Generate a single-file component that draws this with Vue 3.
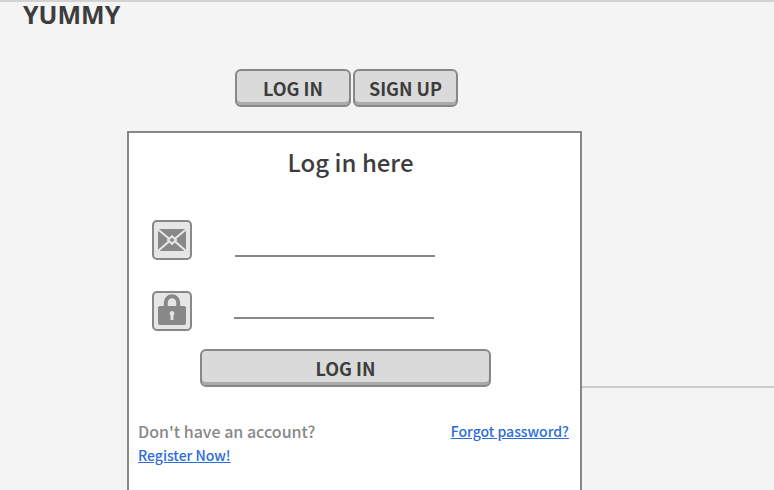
<script setup>
import { ref } from 'vue'

const email = ref('')
const password = ref('')
</script>

<template>
  <div class="page">
    <header class="brand"><span>YUMMY</span></header>
    <nav class="tabs">
      <button class="btn tab-login"><span>LOG IN</span></button>
      <button class="btn tab-signup"><span>SIGN UP</span></button>
    </nav>
    <div class="content">
      <main class="panel">
        <h1>Log in here</h1>
        <div class="field email">
          <span class="icon">
            <svg viewBox="0 0 36 36" width="36" height="36">
              <rect x="4" y="7" width="28" height="22" fill="#888" />
              <path d="M4 7.5 L15.5 17 M32 7.5 L20.5 17 M4 29 L15.5 19 M32 29 L20.5 19" stroke="#e6e6e6" stroke-width="2.2" fill="none" />
              <path d="M18 14.2 L22 18 L18 21.8 L14 18 Z" fill="#888" stroke="#e6e6e6" stroke-width="2" />
            </svg>
          </span>
          <input v-model="email" type="email" aria-label="Email" />
        </div>
        <div class="field password">
          <span class="icon">
            <svg viewBox="0 0 36 36" width="36" height="36">
              <path d="M11.8 15 V9.5 A6.2 6.2 0 0 1 24.2 9.5 V15" fill="none" stroke="#888" stroke-width="4" />
              <rect x="4" y="13" width="28" height="19" rx="2" fill="#888" />
              <path d="M18 18 A2.6 2.6 0 0 1 19.4 22.6 V27 H16.6 V22.6 A2.6 2.6 0 0 1 18 18 Z" fill="#e6e6e6" />
            </svg>
          </span>
          <input v-model="password" type="password" aria-label="Password" />
        </div>
        <button class="btn submit"><span>LOG IN</span></button>
        <div class="links">
          <div class="register">
            <p>Don't have an account?</p>
            <a href="#">Register Now!</a>
          </div>
          <a class="forgot" href="#">Forgot password?</a>
        </div>
      </main>
      <hr class="divider" />
    </div>
  </div>
</template>

<style>
body {
  margin: 0;
  overflow: hidden;
}
</style>

<style scoped>
* {
  box-sizing: border-box;
}

.page {
  height: 490px;
  overflow: hidden;
  background: #f4f4f4;
  border-top: 2px solid #d2d2d2;
  color: #3d3d3d;
  font-family: "Noto Sans CJK SC", "Noto Sans", sans-serif;
}

.brand {
  height: 67px;
  padding-left: 23px;
  font-family: "Open Sans", sans-serif;
  font-size: 25px;
  font-weight: 700;
  line-height: 24px;
}

.tabs {
  display: flex;
  gap: 2px;
  padding-left: 235px;
}

.btn {
  display: block;
  height: 38px;
  padding: 0;
  border: 2px solid #888;
  border-radius: 6px;
  background: #dadada;
  box-shadow: inset 0 -3px 0 #aaa;
  color: #3d3d3d;
  font-family: inherit;
  font-size: 18px;
  font-weight: 700;
  line-height: 34px;
  text-align: center;
}

.tab-login {
  width: 116px;
}

.tab-signup {
  width: 105px;
}

.content {
  display: flex;
  margin-top: 24px;
  padding-left: 127px;
}

.panel {
  width: 455px;
  height: 370px;
  flex: none;
  border: 2px solid #888;
  background: #fff;
}

h1 {
  margin: 13px 8px 0 0;
  font-size: 24px;
  font-weight: 500;
  line-height: 32px;
  text-align: center;
}

.field {
  display: flex;
  height: 40px;
  padding-left: 23px;
}

.email {
  margin-top: 42px;
}

.password {
  margin-top: 31px;
}

.icon {
  width: 40px;
  height: 40px;
  flex: none;
  border: 2px solid #888;
  border-radius: 5px;
  background: #e6e6e6;
}

.icon svg {
  display: block;
}

input {
  width: 200px;
  height: 37px;
  margin: 0 0 0 43px;
  padding: 0;
  border: 0;
  border-bottom: 2px solid #888;
  outline: 0;
  background: transparent;
}

.password input {
  height: 28px;
  margin-left: 42px;
}

.submit {
  width: 291px;
  margin: 18px 0 0 71px;
}

.links {
  display: flex;
  justify-content: space-between;
  margin-top: 32px;
  padding: 0 11px 0 9px;
}

.register p {
  margin: 0;
  color: #888;
  font-size: 16px;
  font-weight: 500;
  line-height: 24px;
}

a {
  display: block;
  color: #2b6cd9;
  font-size: 14px;
  font-weight: 500;
  line-height: 24px;
  text-decoration: underline;
}

.divider {
  flex: 1;
  height: 2px;
  margin: 255px 0 0;
  border: 0;
  background: #ccc;
}
</style>
